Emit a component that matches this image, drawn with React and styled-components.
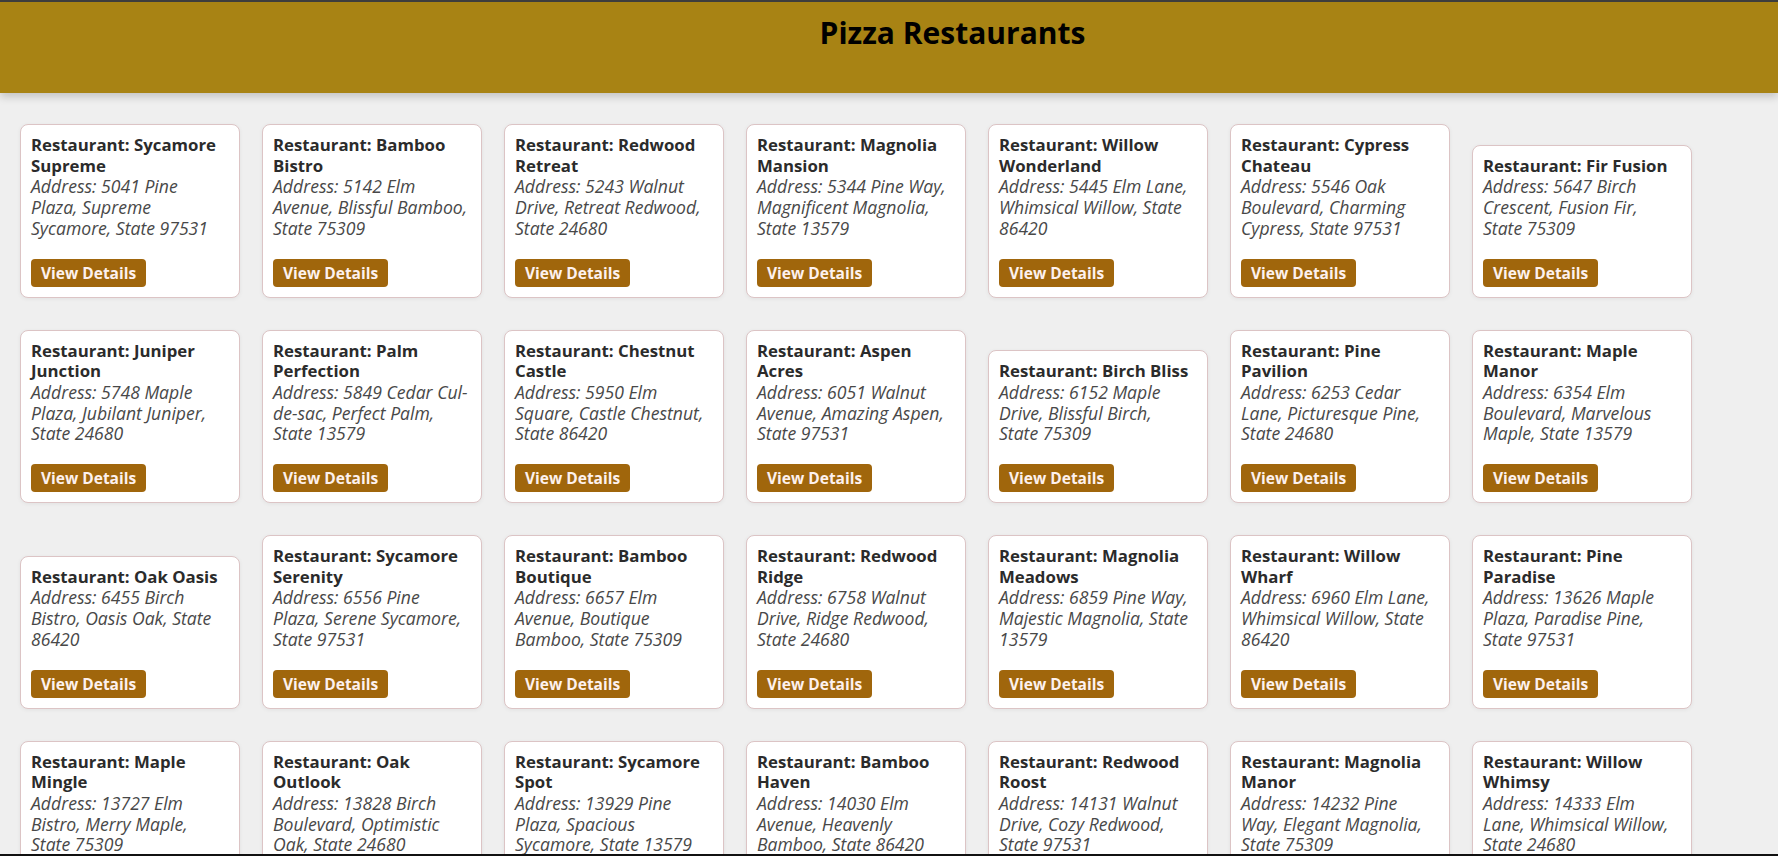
import React from 'react'
import styled, { createGlobalStyle } from 'styled-components'

const restaurants = [
	{ name: 'Sycamore\nSupreme', address: '5041 Pine\nPlaza, Supreme\nSycamore, State 97531' },
	{ name: 'Bamboo\nBistro', address: '5142 Elm\nAvenue, Blissful Bamboo,\nState 75309' },
	{ name: 'Redwood\nRetreat', address: '5243 Walnut\nDrive, Retreat Redwood,\nState 24680' },
	{ name: 'Magnolia\nMansion', address: '5344 Pine Way,\nMagnificent Magnolia,\nState 13579' },
	{ name: 'Willow\nWonderland', address: '5445 Elm Lane,\nWhimsical Willow, State\n86420' },
	{ name: 'Cypress\nChateau', address: '5546 Oak\nBoulevard, Charming\nCypress, State 97531' },
	{ name: 'Fir Fusion', address: '5647 Birch\nCrescent, Fusion Fir,\nState 75309' },
	{ name: 'Juniper\nJunction', address: '5748 Maple\nPlaza, Jubilant Juniper,\nState 24680' },
	{ name: 'Palm\nPerfection', address: '5849 Cedar Cul-\nde-sac, Perfect Palm,\nState 13579' },
	{ name: 'Chestnut\nCastle', address: '5950 Elm\nSquare, Castle Chestnut,\nState 86420' },
	{ name: 'Aspen\nAcres', address: '6051 Walnut\nAvenue, Amazing Aspen,\nState 97531' },
	{ name: 'Birch Bliss', address: '6152 Maple\nDrive, Blissful Birch,\nState 75309' },
	{ name: 'Pine\nPavilion', address: '6253 Cedar\nLane, Picturesque Pine,\nState 24680' },
	{ name: 'Maple\nManor', address: '6354 Elm\nBoulevard, Marvelous\nMaple, State 13579' },
	{ name: 'Oak Oasis', address: '6455 Birch\nBistro, Oasis Oak, State\n86420' },
	{ name: 'Sycamore\nSerenity', address: '6556 Pine\nPlaza, Serene Sycamore,\nState 97531' },
	{ name: 'Bamboo\nBoutique', address: '6657 Elm\nAvenue, Boutique\nBamboo, State 75309' },
	{ name: 'Redwood\nRidge', address: '6758 Walnut\nDrive, Ridge Redwood,\nState 24680' },
	{ name: 'Magnolia\nMeadows', address: '6859 Pine Way,\nMajestic Magnolia, State\n13579' },
	{ name: 'Willow\nWharf', address: '6960 Elm Lane,\nWhimsical Willow, State\n86420' },
	{ name: 'Pine\nParadise', address: '13626 Maple\nPlaza, Paradise Pine,\nState 97531' },
	{ name: 'Maple\nMingle', address: '13727 Elm\nBistro, Merry Maple,\nState 75309' },
	{ name: 'Oak\nOutlook', address: '13828 Birch\nBoulevard, Optimistic\nOak, State 24680' },
	{ name: 'Sycamore\nSpot', address: '13929 Pine\nPlaza, Spacious\nSycamore, State 13579' },
	{ name: 'Bamboo\nHaven', address: '14030 Elm\nAvenue, Heavenly\nBamboo, State 86420' },
	{ name: 'Redwood\nRoost', address: '14131 Walnut\nDrive, Cozy Redwood,\nState 97531' },
	{ name: 'Magnolia\nManor', address: '14232 Pine\nWay, Elegant Magnolia,\nState 75309' },
	{ name: 'Willow\nWhimsy', address: '14333 Elm\nLane, Whimsical Willow,\nState 24680' },
]

const GlobalStyle = createGlobalStyle`
	body {
		margin: 0;
		background: #efefef;
		font-family: "Open Sans", "Noto Sans", sans-serif;
		color: #333;
	}
`
const Header = styled.header`
	box-sizing: border-box;
	height: 93px;
	padding: 11px 0 0 127px;
	background: #a88314;
	border-top: 2px solid #3d3d3d;
	box-shadow: 0 4px 8px rgba(0, 0, 0, 0.18);
	text-align: center;
`
const Title = styled.h1`
	margin: 0;
	font-size: 30px;
	line-height: 40px;
	font-weight: 700;
	color: #000;
`
const Grid = styled.main`
	display: flex;
	flex-wrap: wrap;
	align-items: flex-end;
	column-gap: 22px;
	row-gap: 32px;
	padding: 31px 20px 40px;
`
const Card = styled.div`
	box-sizing: border-box;
	width: 220px;
	padding: 10px;
	background: #fff;
	border: 1px solid #dcc4c5;
	border-radius: 8px;
	box-shadow: 0 1px 4px rgba(0, 0, 0, 0.06);
`
const Name = styled.h3`
	margin: 0;
	font-size: 16.8px;
	line-height: 20.7px;
	font-weight: 700;
	color: #2b2b2b;
	white-space: pre;
`
const Address = styled.p`
	margin: 0 0 20px;
	font-size: 17.6px;
	line-height: 20.7px;
	font-style: italic;
	color: #484848;
	white-space: pre;
`
const DetailsButton = styled.button`
	display: block;
	height: 28px;
	padding: 0 10px;
	border: none;
	border-radius: 4px;
	background: #a0660c;
	color: #fdf1ee;
	font-family: inherit;
	font-size: 15.5px;
	font-weight: 700;
	cursor: pointer;
`
const FrameEdge = styled.div`
	position: fixed;
	left: 0;
	right: 0;
	bottom: 0;
	height: 2px;
	background: #111;
`

const App = () =>
{
	return (
		<>
			<GlobalStyle />
			<Header>
				<Title>Pizza Restaurants</Title>
			</Header>
			<Grid>
				{ restaurants.map(r => (
					<Card key={ r.name + r.address }>
						<Name>Restaurant: { r.name }</Name>
						<Address>Address: { r.address }</Address>
						<DetailsButton>View Details</DetailsButton>
					</Card>
				)) }
			</Grid>
			<FrameEdge />
		</>
	)
}

export default App
